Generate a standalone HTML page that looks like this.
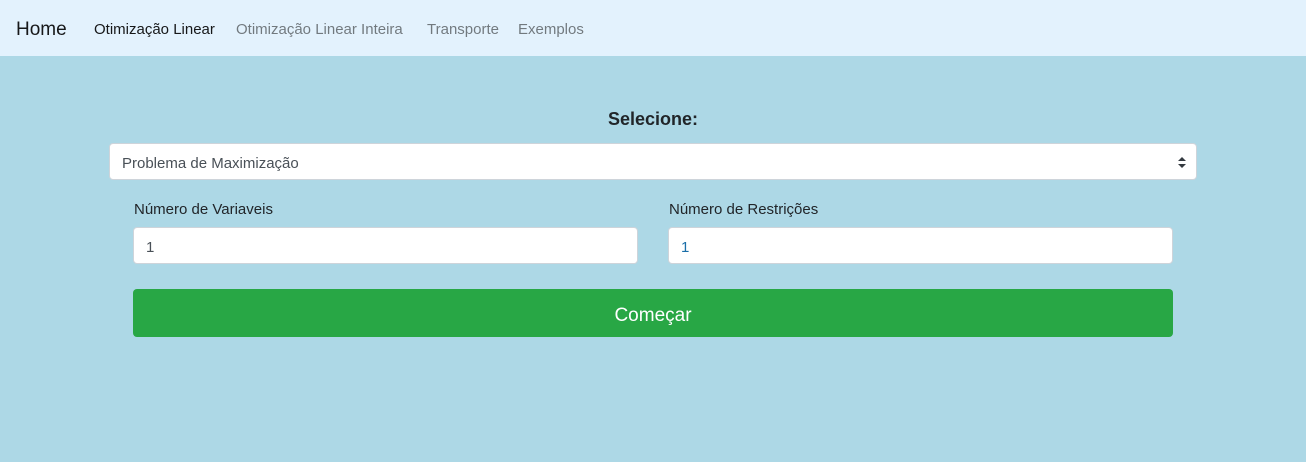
<!DOCTYPE html>
<html><head><meta charset="utf-8"><style>
*{box-sizing:border-box;margin:0;padding:0}
body{width:1306px;height:462px;background:#add8e6;font-family:"Liberation Sans",sans-serif;color:#212529;position:relative;overflow:hidden}
.nav{position:absolute;left:0;top:0;width:1306px;height:56px;background:#e3f2fd}
.nav span{position:absolute;top:21px;font-size:15px;color:rgba(0,0,0,.5)}
.nav .home{left:16px;top:19px;font-size:19px;color:rgba(0,0,0,.9)}
.abs{position:absolute}
.input{position:absolute;background:#fff;border:1px solid #ced4da;border-radius:4px;font-size:15px;color:#495057;padding-left:12px;padding-top:2px;line-height:36px}
label{position:absolute;font-size:15px}
</style></head><body>
<div class="nav">
<span class="home">Home</span>
<span style="left:94px;color:rgba(0,0,0,.9)">Otimização Linear</span>
<span style="left:236px">Otimização Linear Inteira</span>
<span style="left:427px">Transporte</span>
<span style="left:518px">Exemplos</span>
</div>
<div class="abs" style="left:0;width:1306px;top:109px;text-align:center;font-size:18px;font-weight:bold">Selecione:</div>
<div class="input" style="left:109px;top:143px;width:1088px;height:37px">Problema de Maximização
<svg style="position:absolute;right:10px;top:13px" width="8" height="11" viewBox="0 0 8 11"><path d="M0 4L4 0L8 4Z M0 7L4 11L8 7Z" fill="#343a40"/></svg></div>
<label style="left:134px;top:201px">Número de Variaveis</label>
<label style="left:669px;top:201px">Número de Restrições</label>
<div class="input" style="left:133px;top:227px;width:505px;height:37px">1</div>
<div class="input" style="left:668px;top:227px;width:505px;height:37px;color:#1a6ea8">1</div>
<div class="abs" style="left:133px;top:289px;width:1040px;height:48px;background:#28a745;border-radius:4px;color:#fff;font-size:19px;text-align:center;line-height:48px;padding-top:3px">Começar</div>
</body></html>
